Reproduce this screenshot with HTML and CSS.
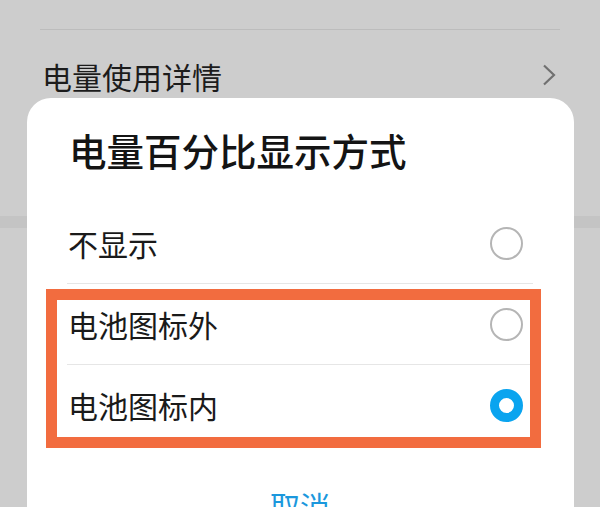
FILE: index.html
```html
<!DOCTYPE html>
<html lang="zh-CN">
<head>
<meta charset="utf-8">
<title>电量百分比显示方式</title>
<link rel="stylesheet" href="styles.css">
</head>
<body>
<div class="settings">
  <div class="settings-inner">
    <div class="divider"></div>
    <div class="settings-row">
      <span class="settings-label">电量使用详情</span>
      <svg class="chevron" width="14" height="22" viewBox="0 0 14 22"><path d="M2 1.5 L12 11 L2 20.5" fill="none" stroke="#707070" stroke-width="2.2" stroke-linejoin="miter"/></svg>
    </div>
  </div>
  <div class="band"></div>
</div>

<div class="dialog">
  <h1 class="dialog-title">电量百分比显示方式</h1>
  <ul class="options">
    <li class="option"><span class="option-label">不显示</span><span class="radio"></span></li>
    <li class="option"><span class="option-label">电池图标外</span><span class="radio"></span></li>
    <li class="option"><span class="option-label">电池图标内</span><span class="radio radio-on"></span></li>
  </ul>
  <div class="cancel">取消</div>
  <div class="highlight"></div>
</div>
</body>
</html>
```
FILE: styles.css
```css
html, body {
  margin: 0;
  padding: 0;
}
body {
  width: 600px;
  height: 507px;
  overflow: hidden;
  position: relative;
  background: #cdcdcd;
  font-family: "Noto Sans CJK SC", "Noto Sans", sans-serif;
}
.settings-inner {
  padding: 29px 40px 0 40px;
}
.divider {
  height: 1px;
  background: #bcbcbc;
}
.settings-row {
  height: 96px;
  display: flex;
  align-items: center;
  justify-content: space-between;
  padding: 0 4px 0 2px;
}
.settings-label {
  font-size: 30px;
  line-height: 40px;
  color: #1c1c1c;
  position: relative;
  top: -2px;
}
.chevron {
  display: block;
  position: relative;
  top: -3px;
}
.band {
  margin-top: 90px;
  height: 12px;
  background: #c4c4c4;
}
.dialog {
  position: absolute;
  left: 27px;
  top: 98px;
  width: 547px;
  height: 460px;
  box-sizing: border-box;
  background: #ffffff;
  border-radius: 24px;
  padding: 30px 41px 0 40px;
}
.dialog-title {
  margin: 0 0 31px 2px;
  font-size: 37.5px;
  line-height: 44px;
  font-weight: 500;
  color: #141414;
}
.options {
  list-style: none;
  margin: 0;
  padding: 0;
}
.option {
  height: 80px;
  display: flex;
  align-items: center;
  justify-content: space-between;
  border-bottom: 1px solid #e6e6e6;
}
.option:last-child {
  border-bottom: none;
}
.option-label {
  font-size: 30px;
  line-height: 40px;
  color: #1a1a1a;
  padding-left: 1px;
}
.radio {
  width: 33px;
  height: 33px;
  box-sizing: border-box;
  border-radius: 50%;
  border: 2px solid #b5b5b5;
  margin-right: 10px;
}
.radio-on {
  border: 9px solid #0aa4ef;
}
.cancel {
  margin-top: 40px;
  text-align: center;
  font-size: 30px;
  line-height: 40px;
  color: #1b98dd;
}
.highlight {
  position: absolute;
  left: 19px;
  top: 191px;
  width: 495px;
  height: 159px;
  box-sizing: border-box;
  border: 11px solid #f26c3f;
}
```
